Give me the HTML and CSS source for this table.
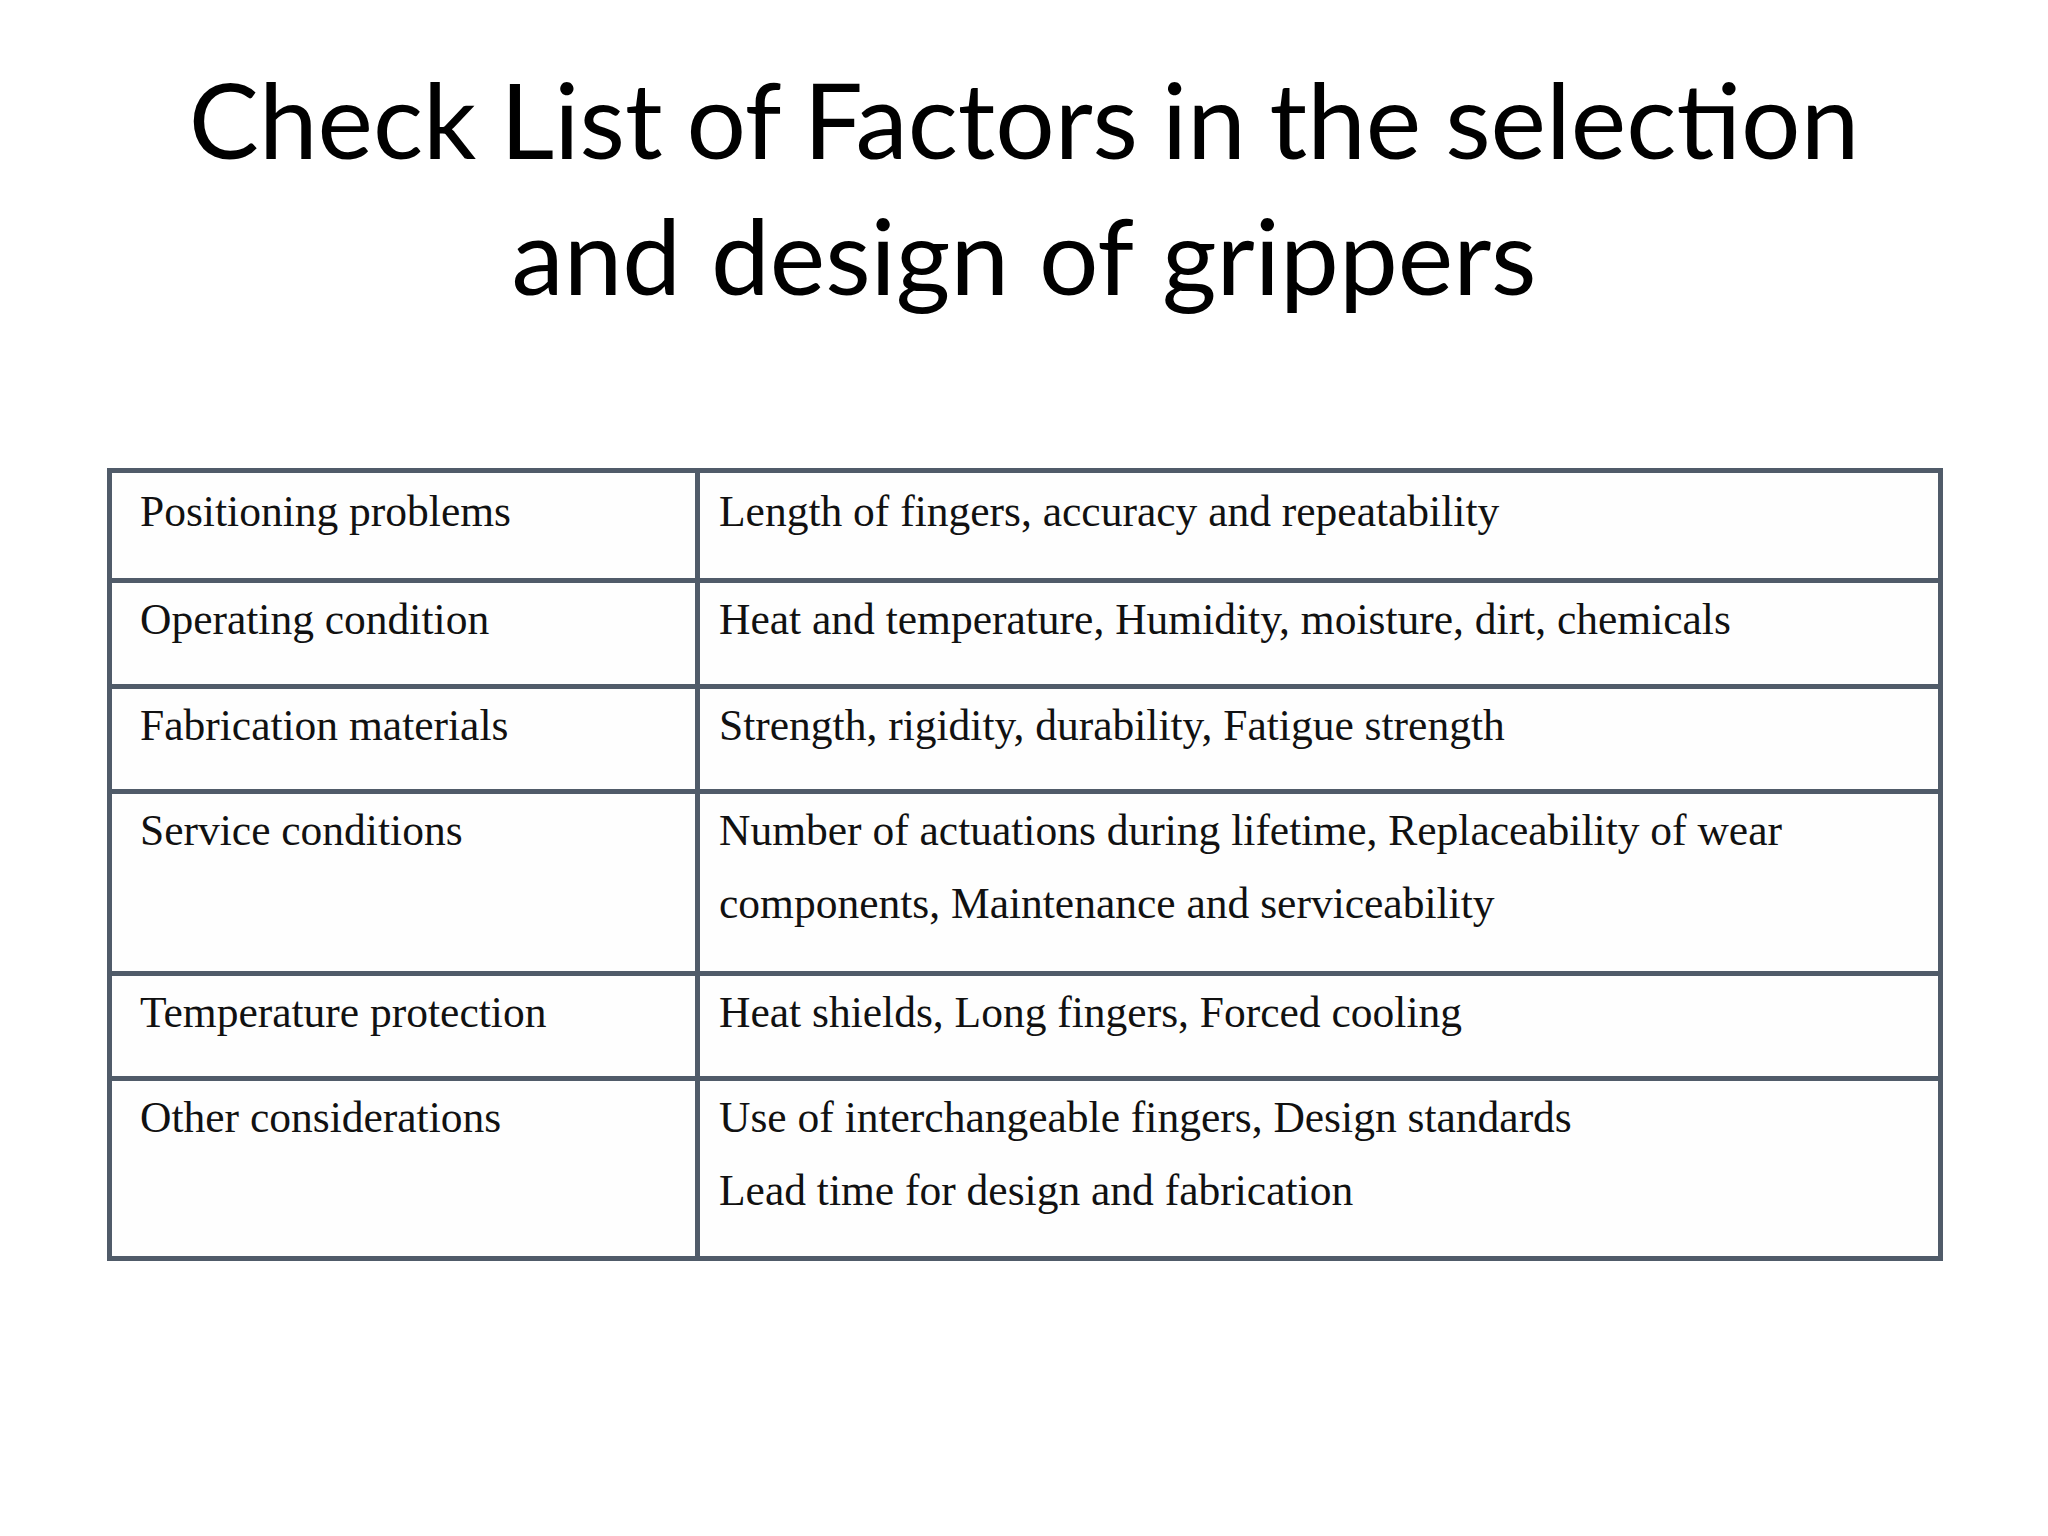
FILE: index.html
```html
<!DOCTYPE html>
<html lang="en">
<head>
<meta charset="utf-8">
<title>Check List of Factors in the selection and design of grippers</title>
<link rel="stylesheet" href="styles.css">
</head>
<body>
<main class="slide">
  <h1 class="title"><span class="line">Check List of Factors in the selection</span><span class="line line-2">and design of grippers</span></h1>
  <div class="table">
    <div class="cell key first">Positioning problems</div>
    <div class="cell val first">Length of fingers, accuracy and repeatability</div>
    <div class="cell key">Operating condition</div>
    <div class="cell val">Heat and temperature, Humidity, moisture, dirt, chemicals</div>
    <div class="cell key">Fabrication materials</div>
    <div class="cell val">Strength, rigidity, durability, Fatigue strength</div>
    <div class="cell key">Service conditions</div>
    <div class="cell val">Number of actuations during lifetime, Replaceability of wear components, Maintenance and serviceability</div>
    <div class="cell key">Temperature protection</div>
    <div class="cell val">Heat shields, Long fingers, Forced cooling</div>
    <div class="cell key">Other considerations</div>
    <div class="cell val">Use of interchangeable fingers, Design standards<br>Lead time for design and fabrication</div>
  </div>
</main>
</body>
</html>
```
FILE: styles.css
```css
html, body {
  margin: 0;
  padding: 0;
  background: #ffffff;
}

.slide {
  width: 2048px;
  height: 1536px;
  display: flex;
  flex-direction: column;
  align-items: flex-start;
  background: #ffffff;
}

.title {
  align-self: stretch;
  margin: 0;
  padding-top: 50px;
  font-family: "Lato", "Open Sans", sans-serif;
  font-weight: 400;
  font-size: 105px;
  word-spacing: -3px;
  line-height: 136px;
  text-align: center;
  color: #000000;
}

.title .line {
  display: block;
}

.title .line-2 {
  word-spacing: 3px;
}

.table {
  margin-top: 146px;
  margin-left: 107px;
  display: grid;
  grid-template-columns: 583px 1238px;
  grid-template-rows: 105px 101px 100px 177px 100px 175px;
  gap: 5px;
  padding: 5px;
  background: #505b69;
}

.cell {
  background: #fefefe;
  font-family: "Liberation Serif", "Times New Roman", serif;
  font-size: 43.5px;
  line-height: 73px;
  color: #111111;
  padding-top: 0;
  box-sizing: border-box;
}

.cell.first {
  padding-top: 2px;
}

.key {
  padding-left: 28px;
}

.val {
  padding-left: 19px;
  padding-right: 30px;
}
```
